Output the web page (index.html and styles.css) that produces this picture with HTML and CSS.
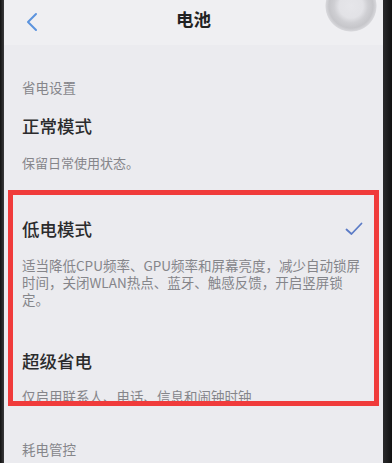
FILE: index.html
```html
<!DOCTYPE html>
<html lang="zh">
<head>
<meta charset="utf-8">
<link rel="stylesheet" href="styles.css">
</head>
<body>
<div class="frame">
  <div class="bezel-left"></div>
  <div class="screen">
    <div class="header">
      <svg class="back" width="14" height="20" viewBox="0 0 14 20"><path d="M11 2 L3 10 L11 18" fill="none" stroke="#5b93de" stroke-width="2" stroke-linecap="round" stroke-linejoin="round"/></svg>
      <div class="title">电池</div>
    </div>
    <div class="section-label">省电设置</div>
    <div class="item-title t1">正常模式</div>
    <div class="item-desc d1">保留日常使用状态。</div>
    <div class="item-row">
      <div class="item-title">低电模式</div>
      <svg class="check" width="18" height="14" viewBox="0 0 18 14"><path d="M1.5 7.5 L6.5 12 L16.5 1.5" fill="none" stroke="#5b7bc6" stroke-width="1.8" stroke-linecap="round" stroke-linejoin="round"/></svg>
    </div>
    <div class="item-desc long">适当降低CPU频率、GPU频率和屏幕亮度，减少自动锁屏时间，关闭WLAN热点、蓝牙、触感反馈，开启竖屏锁定。</div>
    <div class="item-title t3">超级省电</div>
    <div class="item-desc d3">仅启用联系人、电话、信息和闹钟时钟</div>
    <div class="section-label s2">耗电管控</div>
    <div class="assist"></div>
  </div>
  <div class="bezel-right"></div>
</div>
<div class="highlight"></div>
</body>
</html>
```
FILE: styles.css
```css
html, body {
  margin: 0;
  padding: 0;
}
body {
  width: 392px;
  height: 463px;
  overflow: hidden;
  position: relative;
  font-family: "Noto Sans CJK SC", "Noto Sans", sans-serif;
  background: #ebebef;
}
.frame {
  display: flex;
  height: 463px;
}
.bezel-left {
  width: 4px;
  background: linear-gradient(to right, #111, #3a3a3c);
}
.bezel-right {
  width: 9px;
  background: linear-gradient(to right, #2a2a2c, #111);
}
.screen {
  flex: 1;
  position: relative;
  overflow: hidden;
  background: #ebebef;
  padding: 0 18px;
}
.header {
  height: 45px;
  margin: 0 -18px;
  background: #efeff2;
  display: flex;
  align-items: center;
  justify-content: center;
  position: relative;
}
.back {
  position: absolute;
  left: 21px;
  top: 12px;
}
.title {
  font-size: 17.5px;
  font-weight: 700;
  color: #222;
  line-height: 24px;
  margin-top: -7px;
}
.section-label {
  font-size: 13.5px;
  line-height: 20px;
  color: #85858a;
  margin-top: 32px;
}
.section-label.s2 {
  margin-top: 34px;
}
.item-title {
  font-size: 17.5px;
  font-weight: 500;
  line-height: 24px;
  color: #2b2b2d;
}
.t1 {
  margin-top: 17px;
}
.item-desc {
  font-size: 13px;
  line-height: 18px;
  color: #85858a;
}
.d1 {
  margin-top: 16px;
}
.item-row {
  display: flex;
  align-items: center;
  justify-content: space-between;
  margin-top: 45px;
}
.check {
  margin-right: 2px;
}
.item-desc.long {
  font-size: 13.5px;
  line-height: 17px;
  margin-top: 16px;
  width: 345px;
}
.t3 {
  margin-top: 41px;
}
.item-desc.d3 {
  font-size: 13.5px;
  line-height: 17px;
  margin-top: 15px;
}
.assist {
  position: absolute;
  left: 321px;
  top: -20px;
  width: 52px;
  height: 52px;
  border-radius: 50%;
  background: radial-gradient(circle at 50% 50%, #e6e6ea 0, #e2e2e6 12px, #cfcfd3 17px, #c6c6ca 22px, #d6d6da 25px, rgba(235,235,239,0) 26px);
}
.highlight {
  position: absolute;
  left: 8px;
  top: 190px;
  width: 361px;
  height: 206px;
  border: 5px solid #f03b3b;
}
```
